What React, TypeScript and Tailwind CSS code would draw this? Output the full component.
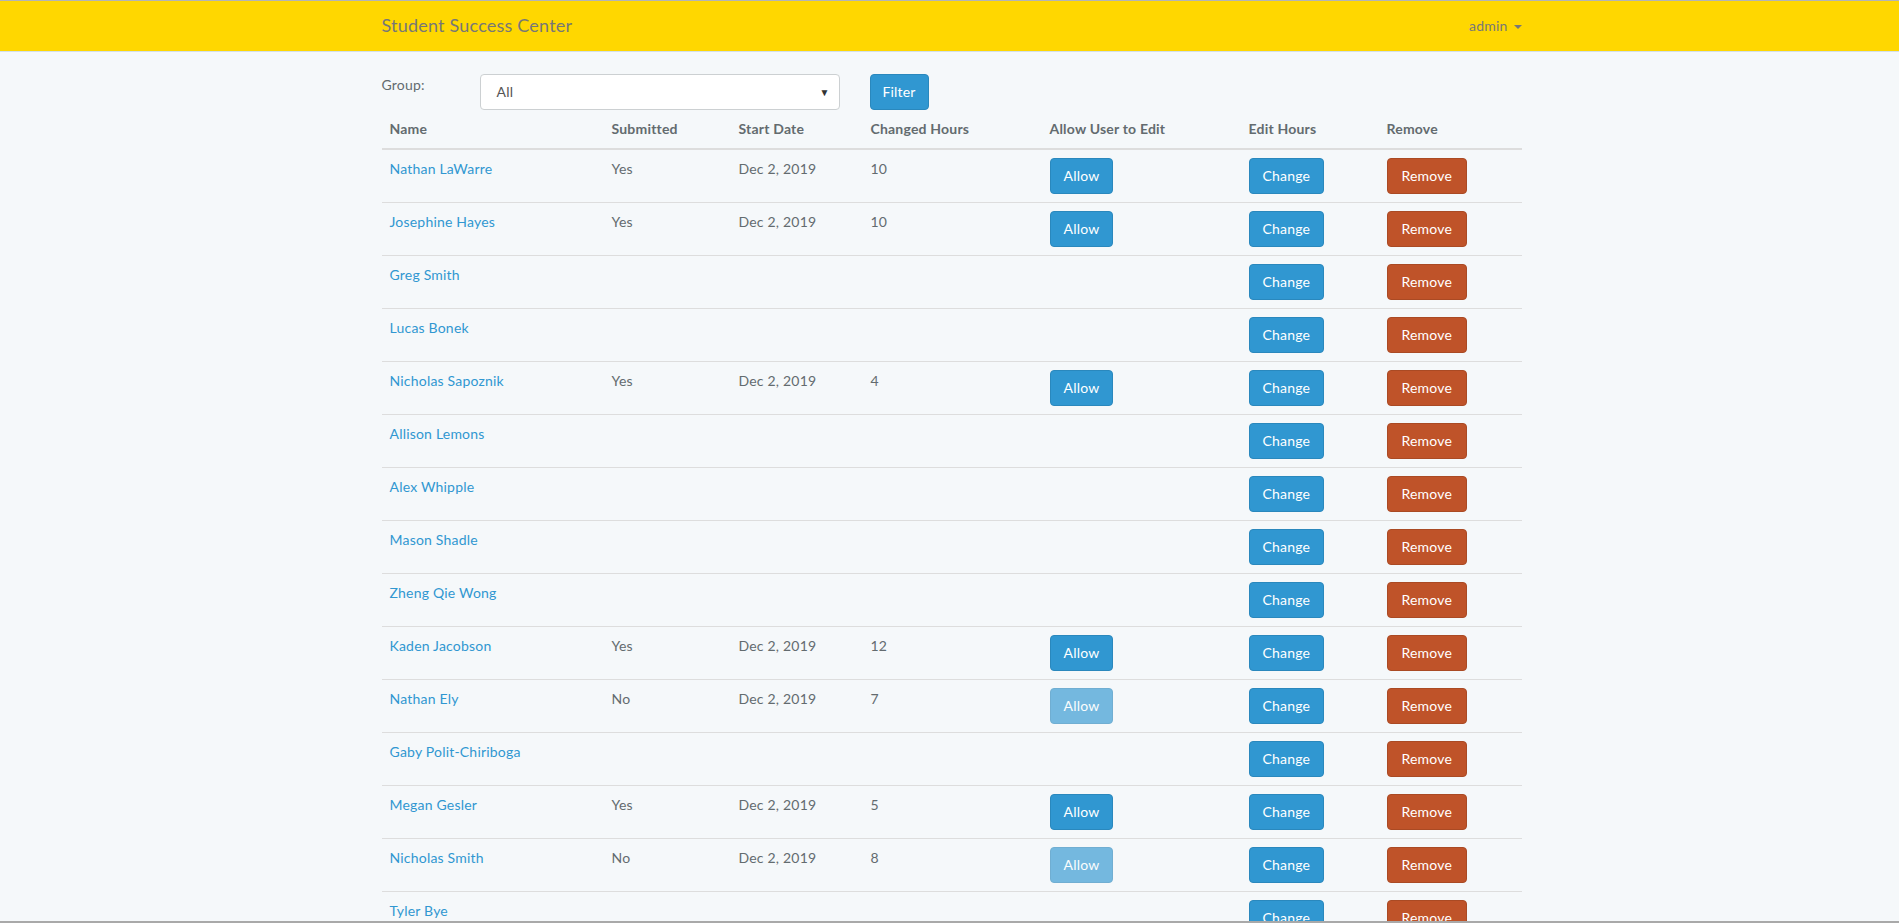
import React from "react";

type Row = {
  name: string;
  submitted?: string;
  date?: string;
  hours?: string;
  allow?: "on" | "off";
};

const rows: Row[] = [
  { name: "Nathan LaWarre", submitted: "Yes", date: "Dec 2, 2019", hours: "10", allow: "on" },
  { name: "Josephine Hayes", submitted: "Yes", date: "Dec 2, 2019", hours: "10", allow: "on" },
  { name: "Greg Smith" },
  { name: "Lucas Bonek" },
  { name: "Nicholas Sapoznik", submitted: "Yes", date: "Dec 2, 2019", hours: "4", allow: "on" },
  { name: "Allison Lemons" },
  { name: "Alex Whipple" },
  { name: "Mason Shadle" },
  { name: "Zheng Qie Wong" },
  { name: "Kaden Jacobson", submitted: "Yes", date: "Dec 2, 2019", hours: "12", allow: "on" },
  { name: "Nathan Ely", submitted: "No", date: "Dec 2, 2019", hours: "7", allow: "off" },
  { name: "Gaby Polit-Chiriboga" },
  { name: "Megan Gesler", submitted: "Yes", date: "Dec 2, 2019", hours: "5", allow: "on" },
  { name: "Nicholas Smith", submitted: "No", date: "Dec 2, 2019", hours: "8", allow: "off" },
  { name: "Tyler Bye" },
];

const font = { fontFamily: "Lato, 'Open Sans', sans-serif" };

export default function App() {
  return (
    <div
      className="relative h-[923px] overflow-hidden bg-[#f5f8fa] text-[14px] leading-[22.4px] text-[#636b6f] tracking-[0.2px]"
      style={font}
    >
      <nav className="h-[52px] border-t border-t-[#b4b4b4] border-b border-b-[#d3e0e9] bg-[#ffd700]">
        <div className="mx-auto flex w-[1144px] items-start justify-between pl-[4px]">
          <a className="pt-[13px] text-[18px] leading-[22px] text-[#777777]">Student Success Center</a>
          <a className="flex items-center pt-[14px] leading-[22px] text-[#777777]">
            admin
            <span className="ml-[6px] mt-[2px] h-0 w-0 border-x-[4px] border-t-[4px] border-x-transparent border-t-[#777777]" />
          </a>
        </div>
      </nav>

      <div className="mx-auto mt-[22px] w-[1144px] pl-[4px]">
        <div className="flex items-start">
          <label className="w-[98px]">Group:</label>
          <div className="relative flex h-[36px] w-[360px] items-center rounded-[4px] border border-[#ccd0d2] bg-white pl-[16px] text-[#555555]">
            All
            <span className="absolute right-[9px] top-[10px] text-[10px] leading-[14px] text-[#333333]">▼</span>
          </div>
          <button className="ml-[30px] h-[36px] w-[59px] rounded-[4px] border border-[#2a88bd] bg-[#3097d1] text-white">
            Filter
          </button>
        </div>

        <table className="w-[1140px] table-fixed border-collapse">
          <colgroup>
            <col className="w-[222px]" />
            <col className="w-[127px]" />
            <col className="w-[132px]" />
            <col className="w-[179px]" />
            <col className="w-[199px]" />
            <col className="w-[138px]" />
            <col className="w-[143px]" />
          </colgroup>
          <thead>
            <tr className="border-b-2 border-[#dddddd]">
              {["Name", "Submitted", "Start Date", "Changed Hours", "Allow User to Edit", "Edit Hours", "Remove"].map((h) => (
                <th key={h} className="p-[8px] text-left align-bottom font-bold">
                  {h}
                </th>
              ))}
            </tr>
          </thead>
          <tbody>
            {rows.map((r, i) => (
              <tr key={i} className={i === 0 ? "" : "border-t border-[#dddddd]"}>
                <td className="p-[8px] align-top">
                  <a className="text-[#3097d1]">{r.name}</a>
                </td>
                <td className="p-[8px] align-top">{r.submitted}</td>
                <td className="p-[8px] align-top">{r.date}</td>
                <td className="p-[8px] align-top">{r.hours}</td>
                <td className="h-[53px] p-[8px] align-top">
                  {r.allow && (
                    <button
                      className={
                        r.allow === "on"
                          ? "h-[36px] rounded-[4px] border border-[#2a88bd] bg-[#3097d1] px-[13px] text-white"
                          : "h-[36px] rounded-[4px] border border-[#2a88bd] bg-[#3097d1] px-[13px] text-white opacity-[0.65]"
                      }
                    >
                      Allow
                    </button>
                  )}
                </td>
                <td className="p-[8px] align-top">
                  <button className="h-[36px] rounded-[4px] border border-[#2a88bd] bg-[#3097d1] px-[13px] text-white">
                    Change
                  </button>
                </td>
                <td className="p-[8px] align-top">
                  <button className="h-[36px] rounded-[4px] border border-[#aa4a24] bg-[#bf5329] px-[14px] text-white">
                    Remove
                  </button>
                </td>
              </tr>
            ))}
          </tbody>
        </table>
      </div>

      <div className="absolute bottom-0 left-0 right-0 h-[2px] bg-[#a9a9a9]" />
    </div>
  );
}
